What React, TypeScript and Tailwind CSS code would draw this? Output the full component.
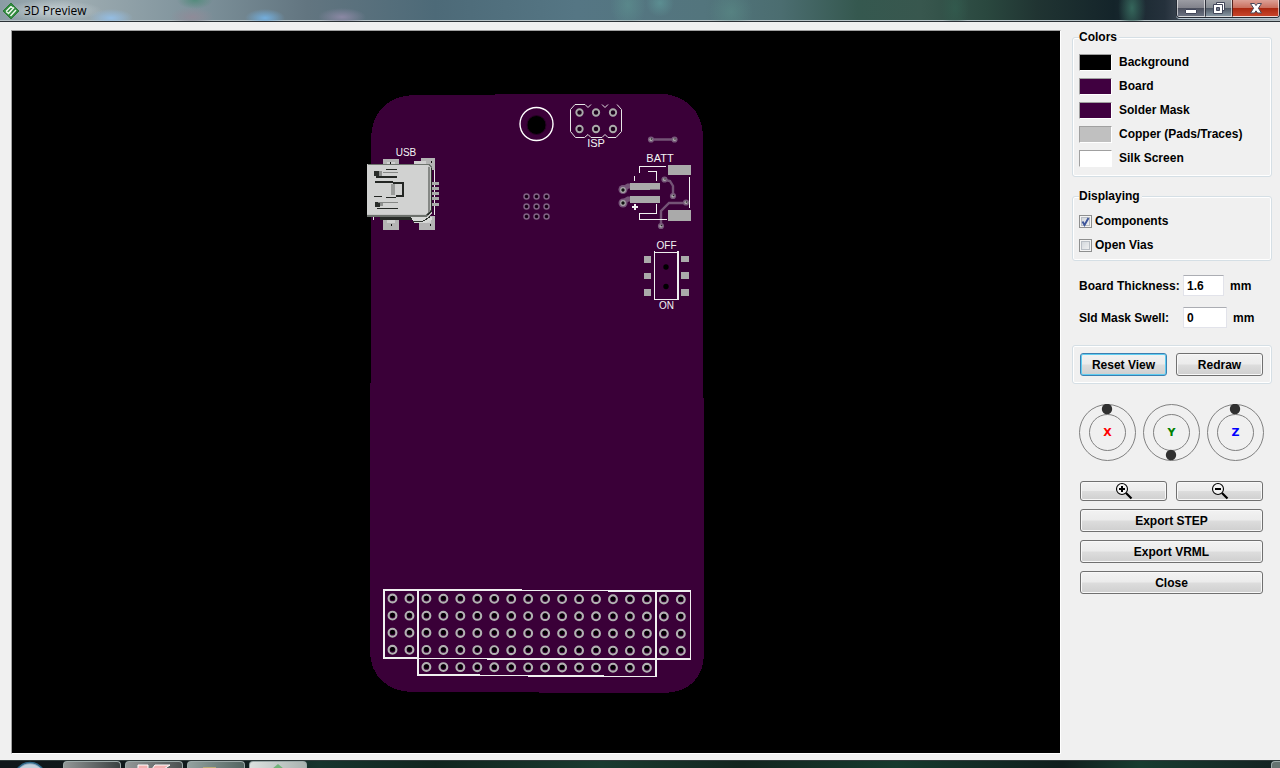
import { useState, type ReactNode } from "react";

const swatches = [
  { id: "background", label: "Background", color: "bg-black" },
  { id: "board", label: "Board", color: "bg-[#400040]" },
  { id: "mask", label: "Solder Mask", color: "bg-[#400040]" },
  { id: "copper", label: "Copper (Pads/Traces)", color: "bg-[#c0c0c0]" },
  { id: "silk", label: "Silk Screen", color: "bg-white" },
];

function Logo() {
  return (
    <svg width="18" height="18" viewBox="0 0 18 18" aria-hidden="true">
      <path d="M9 1 17 9 9 17 1 9Z" fill="#2f8a3d" stroke="#2a7a36" strokeWidth="1" />
      <path d="m4 9.500 5-5M6 12l6-6.500M8.500 14l5.500-6M9 4.500l2 2M4 9.500l2 1.500" fill="none" stroke="#eef8ee" strokeWidth="1.500" />
    </svg>
  );
}

function TitleBar() {
  const glass = "h-full border border-t-0 border-white/60 flex items-center justify-center";
  return (
    <header className="relative flex h-[22px] shrink-0 items-start justify-between border-b border-[#2b3136] bg-[linear-gradient(90deg,#8a9ca4_0%,#a0aeb3_5%,#7f939c_15%,#627580_24%,#4d6a78_34%,#557684_45%,#53757d_55%,#4b6d70_61%,#35584f_67%,#38574e_72%,#2a483f_77%,#203432_81%,#14242a_87%,#25313c_91%,#59616e_94%,#aab2b8_100%)] shadow-[inset_0_-1px_0_#b5c0c4]">
      <div className="pointer-events-none absolute inset-0 bg-[radial-gradient(ellipse_22px_9px_at_111px_18px,#94bde3,transparent),radial-gradient(ellipse_20px_9px_at_265px_18px,#73aedd,transparent),radial-gradient(ellipse_22px_10px_at_192px_17px,#8f8b98,transparent),radial-gradient(ellipse_24px_9px_at_342px_17px,#8b88a4,transparent),radial-gradient(ellipse_18px_24px_at_628px_5px,#5f999480,transparent),radial-gradient(ellipse_14px_14px_at_660px_3px,#62a19f90,transparent),radial-gradient(ellipse_22px_24px_at_731px_12px,#5c918a80,transparent),radial-gradient(ellipse_14px_28px_at_955px_8px,#33615290,transparent),radial-gradient(ellipse_14px_28px_at_1132px_8px,#35665b,transparent),radial-gradient(ellipse_18px_9px_at_195px_0px,#558b7d,transparent)]" />
      <div className="relative flex h-[21px] items-center gap-1 bg-[radial-gradient(ellipse_at_center,rgba(225,232,235,0.6),transparent_70%)] pr-4 pl-0.5">
        <Logo />
        <h1 className="font-['Open_Sans',sans-serif] text-xs text-black">3D Preview</h1>
      </div>
      <div className="relative flex h-[18px] overflow-hidden rounded-b border border-t-0 border-[#242b35] shadow-[0_1px_0_#b9c8d3]">
        <button aria-label="Minimize" className={`${glass} w-7 bg-[linear-gradient(#9b9ca3_0%,#82838c_48%,#4c505e_52%,#6a7180_100%)]`}>
          <svg width="14" height="14" viewBox="0 0 14 14"><rect x="1.500" y="8.500" width="11" height="4" rx=".5" fill="#fff" stroke="#42475a" /></svg>
        </button>
        <button aria-label="Restore" className={`${glass} w-[27px] border-l-[#30343e] bg-[linear-gradient(#a2a5aa_0%,#858b92_48%,#4e5865_52%,#8796a2_100%)]`}>
          <svg width="14" height="14" viewBox="0 0 14 14">
            <path d="M4.500 1.500h8v8h-8z" fill="#fff" stroke="#42475a" />
            <path d="M1.500 3.500h9v9h-9z" fill="#fff" stroke="#42475a" />
            <path d="M4.500 6.500h3v3h-3z" fill="#727989" stroke="#42475a" />
          </svg>
        </button>
        <button aria-label="Close window" className={`${glass} w-[47px] border-l-[#54221d] bg-[linear-gradient(#dca096_0%,#ca705f_48%,#aa2811_52%,#c8442a_100%)]`}>
          <svg width="14" height="14" viewBox="0 0 14 14">
            <path d="M1.500 2.500h4L7 4.600l1.500-2.100h4L9.400 7.200l3.100 4.800h-4L7 9.800 5.500 12h-4l3.100-4.800Z" fill="#fff" stroke="#4a4859" />
          </svg>
        </button>
      </div>
    </header>
  );
}

function Pad({ x, y }: { x: number; y: number }) {
  return (
    <g>
      <circle cx={x} cy={y} r="3.900" fill="#390038" stroke="#b2b2b2" strokeWidth="2.100" />
      <circle cx={x} cy={y - 0.5} r="2.300" fill="#000" />
    </g>
  );
}

function Via({ x, y }: { x: number; y: number }) {
  return (
    <g>
      <circle cx={x} cy={y} r="3.100" fill="#77597a" />
      <circle cx={x} cy={y} r="1.600" fill="#aaa" />
      <circle cx={x + 0.5} cy={y - 0.5} r=".8" fill="#222" />
    </g>
  );
}

function UsbConnector() {
  return (
    <g shapeRendering="crispEdges">
      <path d="M383 159h16v9h-16zM421 158h14v12h-21v-9h7zM383 216h16v14h-16zM419 216h16v14h-16z" fill="#b4b4b4" />
      <path d="M387 218h8v5h-8zM425 218h6v5h-6zM387 162h8v3h-8zM414 161h12v3h-12z" fill="#d0d0d0" />
      <path d="M434.500 170v45M373.500 216v4" stroke="#e8e8e8" />
      <path d="M432 182h7v3h-7zM432 187h7v3h-7zM432 192h7v3h-7zM432 197h7v3h-7zM432 203h7v3h-7z" fill="#aaa" />
      <path d="M380 216h51l-5 4h-46z" fill="#272b27" />
      <path d="M411 217h21v3l-6 3h-12z" fill="#d6d8d6" />
      <path d="M413 221h10l7-4" fill="none" stroke="#2d312d" />
      <path d="M367 164h62l3 3v46l-3 4h-62z" fill="#c5c6c5" />
      <path d="M367 165h61v49h-61z" fill="#d1d2d1" />
      <path d="M368 164.500h61l3 3" fill="none" stroke="#6d736d" />
      <path d="M367 216h59l5-5" fill="none" stroke="#6b706b" strokeWidth="2" />
      <path d="M431.500 168v43l-4 4" fill="none" stroke="#2b2f2b" />
      <path d="M428.500 167v45" stroke="#858885" strokeWidth="2" />
      <path d="M374 171h5v5h-5z" fill="#292c29" />
      <path d="M379 171h3v5h-3z" fill="#8f918f" />
      <path d="M375 202h5v5h-5z" fill="#292c29" />
      <path d="M380 202h3v4h-3z" fill="#8f918f" />
      <path d="M383 172.500h15M378 202.500h20" stroke="#858785" />
      <path d="M375 182h18M393 182.500h10v13h-7M376 177h21" fill="none" stroke="#232623" strokeWidth="2" />
      <path d="M386 169.500h11M374 196.500h8M386 197.500h10M377 208.500h21" fill="none" stroke="#232623" />
      <path d="M391 184h4v11h-4z" fill="#9a9c9a" />
      <path d="M390.500 162v2M431.500 161v2M391.500 224v2M430.500 224v2" stroke="#111" />
    </g>
  );
}

function BoardView() {
  const pads: ReactNode[] = [];
  for (let row = 0; row < 5; row++) {
    for (let col = 0; col < 18; col++) {
      if (row === 4 && (col < 2 || col > 15)) continue;
      pads.push(<Pad key={`${row}-${col}`} x={392.5 + col * 16.96} y={598.5 + row * 17.1 + col * 0.06} />);
    }
  }
  return (
    <svg className="block h-full w-full" viewBox="12 31 1048 722" role="img" aria-label="Circuit board, top side">
      <path
        d="M371 139C371 112 389 95 415 95L657 93.500C685 93.500 703 111 703 137L704 653C704 677 690 693 662 693L413 692C388 692 370 676 370 651Z"
        fill="#3a0038"
        shapeRendering="crispEdges"
      />
      <circle cx="536.500" cy="124" r="16.500" fill="none" stroke="#fff" strokeWidth="1.400" />
      <circle cx="536.500" cy="125" r="9.500" fill="#000" stroke="#270025" />

      <g fill="none" stroke="#e6e6e6">
        <path d="M585 104.500h-10l-4.500 5v22l5 6h9l3.500-3 3 3h11l3-3 3 3h8l5.500-6v-22l-4.500-5M585 104.500l3 3 3-3M602 104.500l3 3 3-3" />
      </g>
      {[579.5, 596, 613].map((x) => (
        <g key={x}>
          <circle cx={x} cy="112.500" r="3.200" fill="#1c001b" stroke="#aaa" strokeWidth="1.900" />
          <circle cx={x} cy="129" r="3.200" fill="#1c001b" stroke="#aaa" strokeWidth="1.900" />
        </g>
      ))}
      {[196.5, 206.5, 216.5].flatMap((y) =>
        [526.5, 536.5, 546.5].map((x) => (
          <circle key={`${x}-${y}`} cx={x} cy={y} r="2.500" fill="#170017" stroke="#806183" strokeWidth="1.500" />
        )),
      )}

      <UsbConnector />

      <g fill="none" stroke="#745476" strokeWidth="2.400">
        <path d="M651 139.500h23M665 180l5 1 3 5v9M686 203h-17l-8 8v15" />
        <path d="M623 189l5-3h6M623 202l5-3h6" strokeWidth="5" />
      </g>
      <path d="M668 165h23v10h-23zM668 210h23v11h-23zM630 183h30v7h-30zM630 196h30v7h-30z" fill="#aaa" />
      <path d="M650 189.500h10" stroke="#79617a" />
      <g fill="none" stroke="#f2f2f2" strokeWidth="1.200" shapeRendering="crispEdges">
        <path d="M666 166.500h-26.500v6M648 171.500h8.500v9M656.500 204v9.500h-17v6h27M689.500 177v31M634.500 176v5" />
      </g>
      <path d="M632 207h6M635 204v6" stroke="#f2f2f2" strokeWidth="2" shapeRendering="crispEdges" />
      <Via x={651} y={139.500} />
      <Via x={674.500} y={139.500} />
      <Via x={664.500} y={179.500} />
      <Via x={673} y={196} />
      <Via x={686} y={202.500} />
      <Via x={661} y={226} />
      <circle cx="623" cy="189.500" r="4.500" fill="#765579" />
      <circle cx="623" cy="203" r="4.500" fill="#765579" />
      <circle cx="623" cy="190" r="2.300" fill="#111" stroke="#aaa" strokeWidth="1.200" />
      <circle cx="623" cy="203" r="2.300" fill="#111" stroke="#aaa" strokeWidth="1.200" />

      <g shapeRendering="crispEdges">
        <path d="M644 256h7v7h-7zM644 273h7v6h-7zM644 289h7v7h-7zM681 256h8v6h-8zM681 272h8v7h-8zM681 289h8v7h-8z" fill="#aaa" />
        <path d="M654.500 251v49M654 252h24M654 299.500h25" fill="none" stroke="#eee" />
        <path d="M678 251v49" stroke="#eee" strokeWidth="2" />
      </g>
      <circle cx="666" cy="267" r="2.700" fill="#000" />
      <circle cx="666" cy="286.500" r="2.700" fill="#000" />

      <g fill="#f4f4f4" fontFamily="Liberation Sans, sans-serif" fontSize="11" fontWeight="400" textAnchor="middle">
        <text x="406" y="156" fontSize="10">USB</text>
        <text x="596" y="147">ISP</text>
        <text x="660" y="162">BATT</text>
        <text x="666.500" y="249" fontSize="10">OFF</text>
        <text x="666.500" y="309" fontSize="10">ON</text>
      </g>

      {pads}
      <g fill="none" stroke="#f0f0f0" strokeWidth="1.500" shapeRendering="crispEdges">
        <path d="M384 590h97l80 .5 129.500.7V659H520l-136-1ZM418 590v85h40l60 .7 138 .9V591" />
      </g>
    </svg>
  );
}

function Dial({ axis, color, flipped }: { axis: string; color: string; flipped?: boolean }) {
  return (
    <button aria-label={`Rotate ${axis}`} className="relative grid size-[57px] place-items-center">
      <svg className="absolute inset-0" width="57" height="57" viewBox="0 0 57 57" fill="none" aria-hidden="true">
        <circle cx="28.500" cy="28.500" r="28" stroke="#808080" />
        <circle cx="28.500" cy="28.500" r="18" stroke="#808080" />
        <circle cx="28" cy={flipped ? 51 : 5} r="5.200" fill="#303030" />
      </svg>
      <span className={`relative font-['DejaVu_Sans',sans-serif] text-[11px] font-bold ${color}`}>{axis}</span>
    </button>
  );
}

function PushButton({ children, focused, short, label }: { children: ReactNode; focused?: boolean; short?: boolean; label?: string }) {
  return (
    <button
      aria-label={label}
      className={`flex flex-1 items-center justify-center rounded-[3px] border bg-[linear-gradient(#f2f2f2_0%,#ebebeb_49%,#dddddd_51%,#cfcfcf_100%)] ${short ? "h-5" : "h-[23px]"} ${
        focused ? "border-[#3c7fb1] shadow-[inset_0_0_0_1px_#5fcdf1]" : "border-[#707070] shadow-[inset_0_0_0_1px_#f8f8f8]"
      }`}
    >
      {children}
    </button>
  );
}

function Magnifier({ plus }: { plus?: boolean }) {
  return (
    <svg width="18" height="18" viewBox="0 0 18 18" fill="none" aria-hidden="true">
      <circle cx="7" cy="7" r="5.500" fill="#f3f3f3" stroke="#000" strokeWidth="1.100" />
      <path d="m11 11 5.500 5.500" stroke="#000" strokeWidth="2.200" />
      <path d={plus ? "M4 7h6M7 4v6" : "M4 7h6"} stroke="#000" strokeWidth="2" />
    </svg>
  );
}

function CheckRow({ label, initial }: { label: string; initial: boolean }) {
  const [checked, setChecked] = useState(initial);
  return (
    <label className="flex h-6 items-center gap-[3px]">
      <span className="relative flex">
        <input
          type="checkbox"
          checked={checked}
          onChange={(e) => setChecked(e.target.checked)}
          className="size-[13px] appearance-none border border-[#8e8f8f] bg-[linear-gradient(135deg,#cdd2d8,#f6f6f6)] shadow-[inset_0_0_0_1px_#f4f4f4,inset_0_0_0_2px_#b9bec5]"
        />
        {checked && (
          <svg className="pointer-events-none absolute inset-0" width="13" height="13" viewBox="0 0 13 13" fill="none" aria-hidden="true">
            <path d="m3.500 6.500 2 3.500 4-7" stroke="#3e569b" strokeWidth="1.900" />
          </svg>
        )}
      </span>
      {label}
    </label>
  );
}

function Measure({ id, label, value, width }: { id: string; label: string; value: string; width: string }) {
  return (
    <div className="flex h-[21px] items-center">
      <label htmlFor={id} className="w-[104px]">{label}</label>
      <input id={id} defaultValue={value} className={`h-[21px] border border-[#e2e3ea] border-t-[#abadb3] bg-white pl-[3px] outline-none ${width}`} />
      <span className="pl-[6px]">mm</span>
    </div>
  );
}

const group = "rounded-[3px] border border-[#d5dfe5] shadow-[inset_0_0_0_1px_#fff]";

function Sidebar() {
  return (
    <aside className="flex w-[200px] shrink-0 flex-col">
      <fieldset className={`${group} px-[6px] py-[6px]`}>
        <legend className="bg-[#f0f0f0] pr-0.5">Colors</legend>
        {swatches.map((s) => (
          <div key={s.id} className="flex h-6 items-center gap-[7px]">
            <button id={s.id} aria-labelledby={`${s.id}-label`} className={`h-[17px] w-[33px] border border-t-[#a0a0a0] border-r-white border-b-white border-l-[#a0a0a0] ${s.color}`} />
            <label id={`${s.id}-label`} htmlFor={s.id}>{s.label}</label>
          </div>
        ))}
      </fieldset>

      <fieldset className={`${group} mt-3 px-[6px] pt-[6px] pb-[3px]`}>
        <legend className="bg-[#f0f0f0] pr-0.5">Displaying</legend>
        <CheckRow label="Components" initial />
        <CheckRow label="Open Vias" initial={false} />
      </fieldset>

      <div className="mt-[14px] flex flex-col gap-[11px] pl-[7px]">
        <Measure id="thickness" label="Board Thickness:" value="1.6" width="w-[41px]" />
        <Measure id="swell" label="Sld Mask Swell:" value="0" width="w-11" />
      </div>

      <div className={`${group} mt-[17px] flex gap-[9px] py-[7px] pr-2 pl-[7px]`}>
        <PushButton focused>Reset View</PushButton>
        <PushButton>Redraw</PushButton>
      </div>

      <div className="mt-5 flex gap-[7px] pl-[7px]">
        <Dial axis="X" color="text-[#ff0000]" />
        <Dial axis="Y" color="text-[#008000]" flipped />
        <Dial axis="Z" color="text-[#0000ff]" />
      </div>

      <div className="mt-5 flex flex-col gap-2 pr-[9px] pl-2">
        <div className="flex gap-[9px]">
          <PushButton short label="Zoom in"><Magnifier plus /></PushButton>
          <PushButton short label="Zoom out"><Magnifier /></PushButton>
        </div>
        <div className="flex"><PushButton>Export STEP</PushButton></div>
        <div className="flex"><PushButton>Export VRML</PushButton></div>
        <div className="flex"><PushButton>Close</PushButton></div>
      </div>
    </aside>
  );
}

function Taskbar() {
  const item = "h-2 w-[58px] overflow-hidden rounded-t-sm border border-b-0 border-[#9caaa9]";
  return (
    <footer className="flex h-2 shrink-0 gap-1 overflow-hidden border-t border-[#303b3b] bg-[linear-gradient(90deg,#10171a_0%,#101a1c_18%,#17352e_25%,#11251f_34%,#1a3b30_47%,#13251f_58%,#163a2e_70%,#101e1d_83%,#183c30_89%,#142222_100%)]">
      <div className="flex w-[59px] justify-center">
        <svg width="30" height="8" viewBox="0 0 30 8" aria-hidden="true">
          <circle cx="15" cy="17" r="15.500" fill="#8fabc0" stroke="#2e6787" strokeWidth="1.500" />
          <path d="M5 7a15 15 0 0 1 20 0" fill="#c2d0da" />
        </svg>
      </div>
      <div className={`${item} bg-[linear-gradient(90deg,#929797,#3a4141)]`} />
      <div className={`${item} bg-[linear-gradient(90deg,#939898,#4b5151)]`}>
        <svg width="56" height="7" viewBox="0 0 56 7" aria-hidden="true">
          <path d="M12 3h10v4H12zM29 3h15l-6 4H26z" fill="#f3b2b2" stroke="#fff" />
        </svg>
      </div>
      <div className={`${item} bg-[linear-gradient(90deg,#93a19f,#546662)]`}>
        <svg width="56" height="7" viewBox="0 0 56 7" aria-hidden="true"><path d="M15 5h13v2H15z" fill="#b7ac75" /></svg>
      </div>
      <div className={`${item} bg-[linear-gradient(90deg,#dce1df,#a9b3b0)]`}>
        <svg width="56" height="7" viewBox="0 0 56 7" aria-hidden="true"><path d="m28 2 6 5H22Z" fill="#71b37a" /></svg>
      </div>
      <div className="ml-auto w-[9px] rounded-tl-sm border-t border-l border-[#9baaa9] bg-[#657370]" />
    </footer>
  );
}

export default function App() {
  return (
    <div className="flex h-screen flex-col overflow-hidden bg-[#f0f0f0] font-['Liberation_Sans',Arial,sans-serif] text-xs leading-[14px] font-bold text-black [&_h1]:font-normal">
      <TitleBar />
      <main className="flex min-h-0 flex-1 gap-[11px] pt-2 pr-2 pb-[6px] pl-[11px]">
        <section className="min-w-0 flex-1 border border-t-[#a0a0a0] border-r-white border-b-white border-l-[#a0a0a0] bg-black">
          <BoardView />
        </section>
        <Sidebar />
      </main>
      <Taskbar />
    </div>
  );
}
